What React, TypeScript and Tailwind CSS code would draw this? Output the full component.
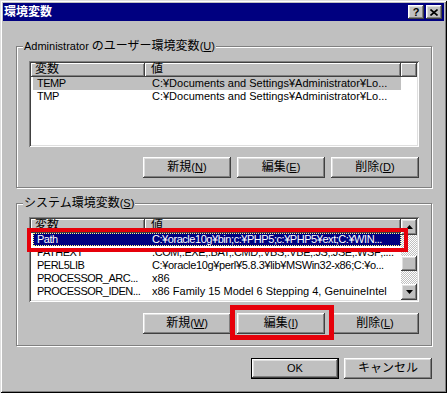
import React from 'react';

const raised =
  'shadow-[inset_-1px_-1px_#404040,inset_1px_1px_#ffffff,inset_-2px_-2px_#808080,inset_2px_2px_#dfdfdf]';
const sunken =
  'shadow-[inset_1px_1px_#808080,inset_-1px_-1px_#ffffff,inset_2px_2px_#404040,inset_-2px_-2px_#dfdfdf]';
const headerCell = 'shadow-[inset_-1px_-1px_#404040,inset_1px_1px_#ffffff,inset_-2px_-2px_#808080]';
const track =
  'bg-[image:repeating-conic-gradient(#c0c0c0_0%_25%,#ffffff_0%_50%)] bg-[length:2px_2px]';

type Row = { name: string; value: string; sel?: 'focus' | 'inactive'; tight?: string };

const J: React.FC<{ children: React.ReactNode }> = ({ children }) => (
  <span className="text-[12px]">{children}</span>
);

const userRows: Row[] = [
  { name: 'TEMP', value: 'C:¥Documents and Settings¥Administrator¥Lo...', sel: 'inactive' },
  { name: 'TMP', value: 'C:¥Documents and Settings¥Administrator¥Lo...' },
];

const systemRows: Row[] = [
  {
    name: 'Path',
    value: 'C:¥oracle10g¥bin;c:¥PHP5;c:¥PHP5¥ext;C:¥WIN...',
    sel: 'focus',
    tight: 'tracking-[-0.45px]',
  },
  { name: 'PATHEXT', value: '.COM;.EXE;.BAT;.CMD;.VBS;.VBE;.JS;.JSE;.WSF;....', tight: 'tracking-[-0.4px]' },
  { name: 'PERL5LIB', value: 'C:¥oracle10g¥perl¥5.8.3¥lib¥MSWin32-x86;C:¥o...', tight: 'tracking-[-0.35px]' },
  { name: 'PROCESSOR_ARC...', value: 'x86' },
  { name: 'PROCESSOR_IDEN...', value: 'x86 Family 15 Model 6 Stepping 4, GenuineIntel' },
  { name: 'PROCESSOR_LEVEL', value: '15' },
];

const ListRow: React.FC<{ row: Row }> = ({ row }) => {
  const sel =
    row.sel === 'focus'
      ? 'bg-[#000080] text-white outline outline-1 outline-dotted outline-[#ffff80] -outline-offset-1'
      : row.sel === 'inactive'
        ? 'bg-[#c0c0c0]'
        : '';
  return (
    <div className={`ml-[2px] flex h-[13px] w-[368px] shrink-0 whitespace-nowrap leading-[13px] ${sel}`}>
      <div className="w-[112px] overflow-hidden pl-[4px] tracking-[-0.5px]">{row.name}</div>
      <div className={`flex-1 overflow-hidden pl-[7px] ${row.tight ?? ''}`}>{row.value}</div>
    </div>
  );
};

const Header: React.FC<{ filler?: boolean }> = ({ filler }) => (
  <div className="flex h-[14px] shrink-0 leading-[13px]">
    <div className={`w-[114px] bg-[#c0c0c0] pl-[4px] ${headerCell}`}>
      <J>変数</J>
    </div>
    <div className={`w-[256px] bg-[#c0c0c0] pl-[6px] ${headerCell}`}>
      <J>値</J>
    </div>
    {filler && <div className={`flex-1 bg-[#c0c0c0] ${headerCell}`} />}
  </div>
);

const Arrow: React.FC<{ down?: boolean }> = ({ down }) => (
  <svg width="7" height="4" viewBox="0 0 7 4">
    {down ? <polygon points="0,0 7,0 3.5,4" fill="#000" /> : <polygon points="0,4 7,4 3.5,0" fill="#000" />}
  </svg>
);

const Scrollbar = () => (
  <div className="flex w-[16px] flex-col">
    <div className={`flex h-[16px] items-center justify-center bg-[#c0c0c0] ${raised}`}>
      <Arrow />
    </div>
    <div className={`h-[21px] ${track}`} />
    <div className={`h-[15px] bg-[#c0c0c0] ${raised}`} />
    <div className={`flex-1 ${track}`} />
    <div className={`flex h-[16px] items-center justify-center bg-[#c0c0c0] ${raised}`}>
      <Arrow down />
    </div>
  </div>
);

const Button: React.FC<{ children: React.ReactNode; isDefault?: boolean }> = ({ children, isDefault }) => (
  <div className={`h-[21px] w-[88px] ${isDefault ? 'border border-black' : ''}`}>
    <div className={`flex h-full items-center justify-center bg-[#c0c0c0] leading-[13px] ${raised}`}>
      <span>{children}</span>
    </div>
  </div>
);

const GroupBox: React.FC<{ label: React.ReactNode; className?: string; children: React.ReactNode }> = ({
  label,
  className = '',
  children,
}) => (
  <div
    className={`ml-[13px] w-[416px] border border-[#808080] pl-[12px] shadow-[inset_1px_1px_#ffffff,1px_1px_#ffffff] ${className}`}
  >
    <div className="-mt-[8px] ml-[-6px] w-fit bg-[#c0c0c0] px-[1px] leading-[14px]">{label}</div>
    {children}
  </div>
);

export default function App() {
  return (
    <div
      className="relative h-[393px] w-[447px] overflow-hidden bg-[#c0c0c0] p-[3px] text-[11px] text-black shadow-[inset_1px_1px_#dfdfdf,inset_-1px_-1px_#000000,inset_2px_2px_#ffffff,inset_-2px_-2px_#808080]"
      style={{ fontFamily: '"Liberation Sans", "Noto Sans CJK JP", sans-serif' }}
    >
      {/* title bar */}
      <div className="flex h-[18px] items-center bg-[#000080] pl-[1px] pr-[2px]">
        <span className="text-[12px] font-bold leading-[18px] text-white">環境変数</span>
        <div className="ml-auto flex gap-[2px]">
          <div
            className={`flex h-[14px] w-[16px] items-center justify-center bg-[#c0c0c0] text-[11px] font-bold leading-[14px] ${raised}`}
          >
            ?
          </div>
          <div className={`flex h-[14px] w-[16px] items-center justify-center bg-[#c0c0c0] ${raised}`}>
            <svg width="8" height="7" viewBox="0 0 8 7">
              <path d="M0.5 0.5 L7.5 6.5 M7.5 0.5 L0.5 6.5" stroke="#000" strokeWidth="1.6" />
            </svg>
          </div>
        </div>
      </div>

      {/* user variables */}
      <GroupBox
        className="mt-[25px] pb-[9px]"
        label={
          <>
            Administrator <J>のユーザー環境変数</J>(<u>U</u>)
          </>
        }
      >
        <div className={`mt-[8px] flex h-[86px] w-[390px] flex-col bg-white p-[2px] ${sunken}`}>
          <Header filler />
          <div className="flex flex-col overflow-hidden">
            {userRows.map((r) => (
              <ListRow key={r.name} row={r} />
            ))}
          </div>
        </div>
        <div className="mt-[10px] flex w-[390px] justify-end gap-[6px]">
          <Button>
            <J>新規</J>(<u>N</u>)
          </Button>
          <Button>
            <J>編集</J>(<u>E</u>)
          </Button>
          <Button>
            <J>削除</J>(<u>D</u>)
          </Button>
        </div>
      </GroupBox>

      {/* system variables */}
      <GroupBox
        className="mt-[15px] pb-[11px]"
        label={
          <>
            <J>システム環境変数</J>(<u>S</u>)
          </>
        }
      >
        <div className={`mt-[7px] flex h-[85px] w-[390px] bg-white p-[2px] ${sunken}`}>
          <div className="flex w-[370px] flex-col overflow-hidden">
            <Header />
            {systemRows.map((r) => (
              <ListRow key={r.name} row={r} />
            ))}
          </div>
          <Scrollbar />
        </div>
        <div className="mt-[11px] flex w-[390px] justify-end gap-[6px]">
          <Button>
            <J>新規</J>(<u>W</u>)
          </Button>
          <Button>
            <J>編集</J>(<u>I</u>)
          </Button>
          <Button>
            <J>削除</J>(<u>L</u>)
          </Button>
        </div>
      </GroupBox>

      {/* dialog buttons */}
      <div className="ml-[13px] mt-[12px] flex w-[416px] justify-end gap-[5px]">
        <Button isDefault>OK</Button>
        <Button>
          <J>キャンセル</J>
        </Button>
      </div>

      {/* red annotation boxes */}
      <div className="absolute left-[27px] top-[228px] h-[24px] w-[381px] border-[4px] border-[#e6000a]" />
      <div className="absolute left-[230px] top-[305px] h-[35px] w-[104px] border-[5px] border-[#e6000a]" />
    </div>
  );
}
